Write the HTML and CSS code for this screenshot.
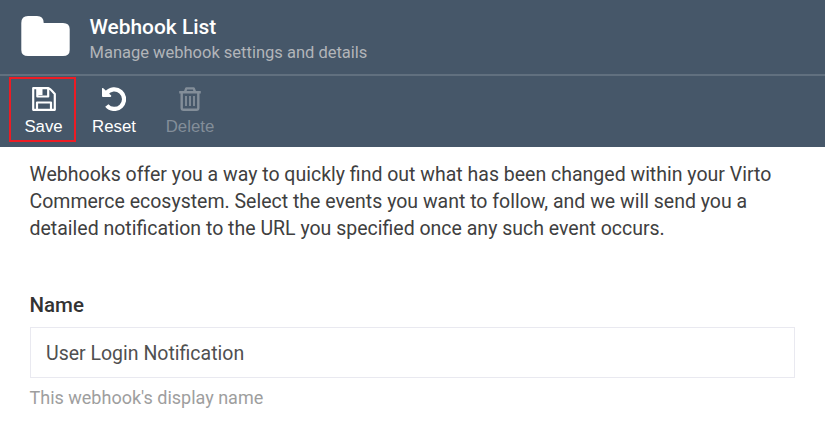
FILE: index.html
```
<!DOCTYPE html>
<html lang="en"><head><meta charset="utf-8"><title>Webhook List</title><link rel="stylesheet" href="styles.css"></head>
<body>
<header class="header">
<svg class="folder" viewBox="0 0 49 40"><path d="M.3 7Q.3 0 7 0H16Q22.7 0 22.7 7H42Q48.7 7 48.7 13V34Q48.7 40 42 40H7Q.3 40 .3 34Z"/></svg>
<div><h1 class="title">Webhook List</h1><p class="subtitle">Manage webhook settings and details</p></div>
</header>
<nav class="toolbar">
<button class="tool save"><svg class="icon" viewBox="0 0 24 24"><path fill="none" stroke="currentColor" stroke-width="2.2" stroke-linejoin="round" d="M1.2 1.2H16.5Q17.5 1.2 22.8 7V22.8H1.2ZM5.3 1.2V9.5H16.2V1.2M5 22V15.5H19V22"/><path fill="currentColor" d="M5.5 2H10.5V8H5.5Z"/></svg><span>Save</span></button>
<button class="tool reset"><svg class="icon" viewBox="0 0 24 24"><path fill="none" stroke="currentColor" stroke-width="4.2" d="M4.5 6.2A9.8 9.8 0 1 1 4.8 18.5"/><path fill="currentColor" d="M0 1.2Q.5 .7 1.3 1.3L9.2 8.6Q9.6 9.5 8.6 10H1Q0 10 0 9Z"/></svg><span>Reset</span></button>
<button class="tool delete" disabled><svg class="icon" viewBox="0 0 24 24"><path fill="none" stroke="currentColor" stroke-width="2.4" stroke-linejoin="round" d="M1.2 5.3H22.8M7 5L8.3 1.4H15.7L17 5M3.7 5V21Q3.7 22.8 5.5 22.8H18.5Q20.3 22.8 20.3 21V5"/><path fill="none" stroke="currentColor" stroke-width="1.8" d="M8 9V19M12 9V19M16 9V19"/></svg><span>Delete</span></button>
</nav>
<main class="content">
<p class="intro">Webhooks offer you a way to quickly find out what has been changed within your Virto<br>Commerce ecosystem. Select the events you want to follow, and we will send you a<br>detailed notification to the URL you specified once any such event occurs.</p>
<label class="label" for="name">Name</label>
<input class="input" id="name" value="User Login Notification">
<p class="hint">This webhook's display name</p>
</main>
</body></html>
```
FILE: styles.css
```
* { box-sizing: border-box; }
body { margin: 0; background: #fff; color: #404040; font-family: Roboto, sans-serif; }
.header { display: flex; gap: 19.5px; height: 76px; padding: 15px 21px 0; background: #465769; border-bottom: 2px solid #61707f; }
.folder { width: 49px; height: 40px; margin-top: 1px; fill: #fff; }
.title { margin: 0; font-size: 20.9px; line-height: 24px; font-weight: 500; color: #fff; }
.subtitle { margin: 0; font-size: 16.5px; line-height: 28px; color: #b2b5b9; }
.toolbar { display: flex; height: 71px; padding: 1px 9px; background: #465769; }
.tool { display: flex; flex-direction: column; align-items: center; padding: 8px 0 0; border: 2px solid transparent; background: none; color: #fff; font: 16.8px/24px "Liberation Sans", sans-serif; height: 65px; }
.icon { width: 24px; height: 24px; margin-bottom: 4px; }
.save { width: 67px; padding-left: 2px; border-color: #ed1c24; }
.reset { width: 76px; }
.delete { width: 76px; color: #838e99; }
.content { padding: 14px 29.5px; }
.intro { margin: 0; font-size: 19.5px; line-height: 27px; }
.label { display: block; margin-top: 50px; color: #333; font-size: 20.5px; line-height: 27px; font-weight: 500; }
.input { display: block; width: 765px; height: 51px; margin-top: 8px; padding: 2px 15px 0 15.5px; border: 1px solid #e9e9f0; color: #505050; font: 19.5px Roboto, sans-serif; }
.hint { margin: 8px 0 0; font-size: 18px; line-height: 24px; color: #9e9e9e; }
```
